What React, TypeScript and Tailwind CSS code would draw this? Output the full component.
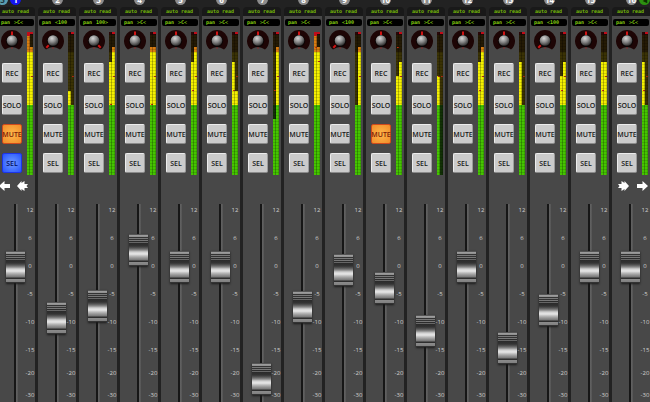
import type { ReactNode } from 'react'
import { clsx } from 'clsx'

interface Channel {
  id: number
  pan: 'C' | 'L' | 'R'
  fader: number
  // lit height of the left and right meter columns
  levels: [number, number]
  // peak markers, measured from the top of the meter
  peaks: [number | null, number | null]
  clip?: boolean
  muted?: boolean
  selected?: boolean
}

const METER_HEIGHT = 143
const FADER_RANGE = 166

const channels: Channel[] = [
  { id: 1, pan: 'C', fader: 119, levels: [140, 128], peaks: [null, 45], clip: true, muted: true, selected: true },
  { id: 2, pan: 'L', fader: 68, levels: [84, 70], peaks: [null, 45] },
  { id: 3, pan: 'R', fader: 80, levels: [113, 128], peaks: [73, 45] },
  { id: 4, pan: 'C', fader: 136, levels: [128, 128], peaks: [73, 45] },
  { id: 5, pan: 'C', fader: 119, levels: [113, 128], peaks: [59, 45] },
  { id: 6, pan: 'C', fader: 119, levels: [113, 84], peaks: [59, 45] },
  { id: 7, pan: 'C', fader: 7, levels: [56, 128], peaks: [59, 45] },
  { id: 8, pan: 'C', fader: 79, levels: [140, 128], peaks: [16, 30], clip: true },
  { id: 9, pan: 'L', fader: 116, levels: [70, 128], peaks: [null, 45] },
  { id: 10, pan: 'C', fader: 98, levels: [99, 113], peaks: [16, 45], muted: true },
  { id: 11, pan: 'C', fader: 55, levels: [99, 0], peaks: [45, 45] },
  { id: 12, pan: 'C', fader: 119, levels: [113, 128], peaks: [59, 45] },
  { id: 13, pan: 'C', fader: 38, levels: [113, 70], peaks: [null, 45] },
  { id: 14, pan: 'L', fader: 76, levels: [99, 113], peaks: [59, 45] },
  { id: 15, pan: 'C', fader: 119, levels: [113, 113], peaks: [59, 45] },
  { id: 16, pan: 'C', fader: 119, levels: [113, 70], peaks: [59, 45] },
]

const panText = { C: '>C<', L: '<100', R: '100>' }
const panAngle = { C: 0, L: -135, R: 135 }

const zones = [
  { from: 0, to: 3, lit: '#c81414', dim: '#2a0808' },
  { from: 3, to: 20, lit: '#d87c10', dim: '#241a04' },
  { from: 20, to: 73, lit: '#f4f000', dim: '#3a3204' },
  { from: 73, to: 143, lit: '#45c400', dim: '#123006' },
]

function Meter({ levels, peaks, clip }: Pick<Channel, 'levels' | 'peaks' | 'clip'>) {
  return (
    <svg width="6" height={METER_HEIGHT} viewBox={`0 0 6 ${METER_HEIGHT}`} shapeRendering="crispEdges" aria-hidden="true">
      {levels.map((level, side) => {
        const top = METER_HEIGHT - level
        const x = side * 3
        const peak = peaks[side]
        return (
          <g key={side}>
            {zones.map((z) => {
              const split = Math.min(Math.max(top, z.from), z.to)
              return (
                <g key={z.from}>
                  <rect x={x} y={z.from} width="3" height={split - z.from} fill={z.dim} />
                  <rect x={x} y={split} width="3" height={z.to - split} fill={z.lit} />
                </g>
              )
            })}
            {peak !== null && <rect x={x + 1} y={peak - 1} width="2" height="1" fill="#c83010" />}
          </g>
        )
      })}
      {Array.from({ length: 48 }, (_, i) => (
        <rect key={i} y={i * 3 + 2} width="6" height="1" fill="#000" opacity="0.12" />
      ))}
      <rect x="2" width="1" height={METER_HEIGHT} fill="#000" opacity="0.25" />
      <rect x="5" width="1" height={METER_HEIGHT} fill="#000" opacity="0.15" />
      <rect x={clip ? 0 : 3} y="0" width={clip ? 6 : 3} height="2" fill="#c00c18" />
      {clip && <rect y="2" width="3" height="2" fill="#c00c18" />}
    </svg>
  )
}

function PanKnob({ id, pan }: Pick<Channel, 'id' | 'pan'>) {
  return (
    <div className="relative -ml-px h-5 w-[22px]">
      <svg width="22" height="20" viewBox="0 0 22 20" aria-hidden="true">
        <defs>
          <radialGradient id={`ball-${id}`} cx="0.4" cy="0.3" r="0.7">
            <stop offset="0" stopColor="#d4d4d4" />
            <stop offset="0.5" stopColor="#8c8c8c" />
            <stop offset="1" stopColor="#333" />
          </radialGradient>
        </defs>
        <path d="M4 19.5A11 11 0 1 1 18 19.5Q11 14.500 4 19.500Z" fill="#1d0505" />
        <circle cx="11" cy="11" r="6.200" fill="#0c0505" />
        <rect x="10" y="1.500" width="2" height="3.500" fill="#d01414" transform={`rotate(${panAngle[pan]} 11 11)`} />
        <circle cx="11" cy="10.500" r="5.300" fill={`url(#ball-${id})`} />
        <rect x="10.500" y="17.500" width="1" height="1" fill="#d01414" />
      </svg>
      <input
        type="range"
        min={-135}
        max={135}
        defaultValue={panAngle[pan]}
        aria-label={`Channel ${id} pan`}
        className="absolute inset-0 m-0 h-full w-full cursor-pointer opacity-0"
      />
    </div>
  )
}

interface PadProps {
  label: string
  channel: number
  tone?: 'grey' | 'orange' | 'blue'
}

function Pad({ label, channel, tone = 'grey' }: PadProps) {
  return (
    <button
      type="button"
      aria-label={`${label} channel ${channel}`}
      aria-pressed={tone !== 'grey'}
      className={clsx(
        'flex h-5 w-5 items-center justify-center rounded-xs border text-[7px] leading-none font-semibold',
        tone === 'grey' && 'border-[#ececec] border-r-[#9c9c9c] border-b-[#8a8a8a] bg-[#cbcbcb] text-[#181818]',
        tone === 'orange' && 'border-[#cf4a1c] bg-radial from-[#ffb84a] to-[#f08c28] text-[#7c1c08]',
        tone === 'blue' && 'border-[#1c34e8] bg-radial from-[#7098ff] to-[#2850ff] text-[#000a60]',
      )}
    >
      {label}
    </button>
  )
}

function Arrow({ direction, double }: { direction: 'left' | 'right'; double?: boolean }) {
  return (
    <button
      type="button"
      aria-label={`${double ? 'Bank' : 'Channel'} ${direction}`}
      className={clsx('text-white', direction === 'right' && '-scale-x-100')}
    >
      {double ? (
        <svg width="11" height="10" viewBox="0 0 11 10" fill="currentColor" className="block">
          <path d="M0 5L4.500 0V2L7.500 0V3H11L9.500 5L11 7H7.500V10L4.500 8V10Z" />
        </svg>
      ) : (
        <svg width="11" height="10" viewBox="0 0 11 10" fill="currentColor" className="block">
          <path d="M0 5L5.500 0V3H11V7H5.500V10Z" />
        </svg>
      )}
    </button>
  )
}

function Badge({ children, className }: { children: ReactNode; className: string }) {
  return (
    <span className={clsx('flex h-[11px] w-[11px] shrink-0 items-center justify-center rounded-full text-[8px] leading-none font-bold', className)}>
      {children}
    </span>
  )
}

const scale = [
  { label: '12', height: 'h-7' },
  { label: '6', height: 'h-7' },
  { label: '0', height: 'h-7' },
  { label: '-5', height: 'h-7' },
  { label: '-10', height: 'h-7' },
  { label: '-15', height: 'h-7' },
  { label: '-20', height: 'h-[18px]' },
  { label: '-30', height: 'h-[26px]' },
]

function Fader({ id, value }: { id: number; value: number }) {
  return (
    <div className="flex shrink-0 pl-[9px]">
      <input
        type="range"
        min={0}
        max={FADER_RANGE}
        defaultValue={value}
        aria-label={`Channel ${id} fader`}
        className="mt-2 h-[198px] w-[19px] shrink-0 cursor-pointer appearance-none bg-[linear-gradient(90deg,transparent_8px,#161616_8px,#161616_10px,#636363_10px,#555_12px,transparent_12px)] [direction:rtl] [writing-mode:vertical-lr] [&::-webkit-slider-thumb]:h-8 [&::-webkit-slider-thumb]:w-[19px] [&::-webkit-slider-thumb]:appearance-none [&::-webkit-slider-thumb]:bg-[linear-gradient(180deg,#555_0px,#555_1px,#a0a0a0_1px,#8c8c8c_3px,#333_3px,#333_4px,#777_4px,#777_5px,#333_5px,#333_6px,#777_6px,#777_7px,#2c2c2c_7px,#2c2c2c_8px,#666_8px,#666_9px,#2a2a2a_9px,#333_12px,#555_14px,#888_16px,#d0d0d0_18px,#e8e8e8_20px,#bbb_22px,#969696_24px,#777_26px,#2e2e2e_27px,#2e2e2e_28px,#8c8c8c_28px,#808080_31px,#333_31px)] [&::-webkit-slider-thumb]:shadow-[0_1px_2px_#1c1c1c]"
      />
      <div className="flex w-[10px] shrink-0 flex-col text-center text-[6px] text-[#d0d0d0]">
        {scale.map((s) => (
          <span key={s.label} className={clsx('flex items-center justify-center', s.height)}>
            {s.label}
          </span>
        ))}
      </div>
    </div>
  )
}

function Strip({ channel }: { channel: Channel }) {
  const { id, pan, fader, levels, peaks, clip, muted, selected } = channel
  return (
    <section aria-label={`Channel ${id}`} className="flex min-w-0 flex-col overflow-hidden">
      <div className="flex h-[7px] shrink-0 items-end gap-[2px] pb-[2px] pl-[14px]">
        {id === 1 && <Badge className="-ml-[14px] bg-[#5a9eb0] text-[#203840]">3</Badge>}
        <Badge className={clsx('text-white', selected ? 'bg-[#1414f0]' : 'bg-[#8c8c8c]')}>{id}</Badge>
        {id === 16 && <Badge className="bg-[#2c9010] text-[#0c3000]">◂</Badge>}
      </div>
      <div className="mr-[3px] flex h-[9px] shrink-0 items-center rounded-t-sm bg-[#191919] pl-[5px] font-['DejaVu_Sans_Mono',monospace] text-[5px] leading-none font-bold whitespace-nowrap text-[#74b808]">
        auto read
      </div>
      <div className="flex flex-1 flex-col border-r-[3px] border-[#222] bg-[#484848]">
        <div className="mx-px mt-[3px] flex h-[7px] shrink-0 items-center gap-1 rounded-xs bg-black pl-[3px] font-['DejaVu_Sans_Mono',monospace] text-[5px] leading-none font-bold whitespace-nowrap text-[#84cc10]">
          <span>pan</span>
          <span>{panText[pan]}</span>
        </div>
        <div className="flex shrink-0 gap-[5px] pt-1 pl-[5px]">
          <div className="flex w-5 shrink-0 flex-col items-start">
            <PanKnob id={id} pan={pan} />
            <div className="mt-[13px] flex flex-col gap-3">
              <Pad label="REC" channel={id} />
              <Pad label="SOLO" channel={id} />
            </div>
            <div className="mt-[9px] flex flex-col gap-[9px]">
              <Pad label="MUTE" channel={id} tone={muted ? 'orange' : 'grey'} />
              <Pad label="SEL" channel={id} tone={selected ? 'blue' : 'grey'} />
            </div>
          </div>
          <div className="shrink-0 pt-[2px]">
            <Meter levels={levels} peaks={peaks} clip={clip} />
          </div>
        </div>
        <div className="flex h-[21px] shrink-0 items-center">
          {id === 1 && (
            <div className="flex gap-[7px] pl-[2px]">
              <Arrow direction="left" />
              <Arrow direction="left" double />
            </div>
          )}
          {id === 16 && (
            <div className="flex gap-2 pl-[6px]">
              <Arrow direction="right" double />
              <Arrow direction="right" />
            </div>
          )}
        </div>
        <Fader id={id} value={fader} />
      </div>
    </section>
  )
}

export default function App() {
  return (
    <main className="h-screen overflow-hidden bg-[#222] font-['Open_Sans',sans-serif]">
      <div className="-mx-[3px] grid h-full grid-cols-16">
        {channels.map((channel) => (
          <Strip key={channel.id} channel={channel} />
        ))}
      </div>
    </main>
  )
}
